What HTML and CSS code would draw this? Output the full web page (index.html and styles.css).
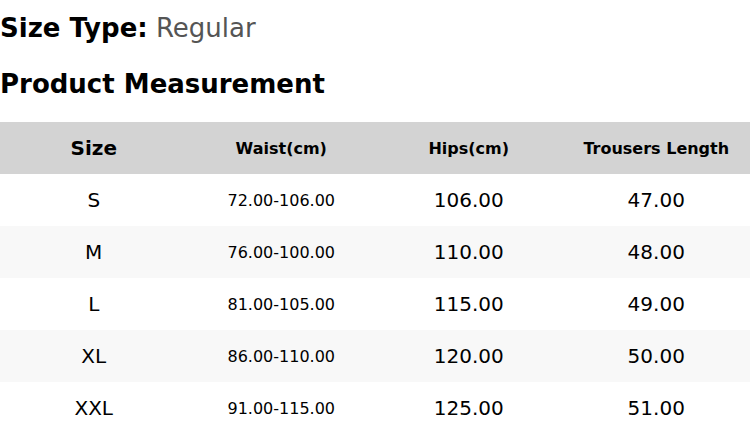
FILE: index.html
```html
<!DOCTYPE html>
<html>
<head>
<meta charset="utf-8">
<link rel="stylesheet" href="styles.css">
</head>
<body>
<div class="page">
  <p class="size-type"><span class="label">Size Type:</span> <span class="value">Regular</span></p>
  <h2 class="title">Product Measurement</h2>
  <table class="chart">
    <thead>
      <tr>
        <th class="col-size">Size</th>
        <th>Waist(cm)</th>
        <th>Hips(cm)</th>
        <th>Trousers Length</th>
      </tr>
    </thead>
    <tbody>
      <tr><td class="big">S</td><td class="small">72.00-106.00</td><td class="big">106.00</td><td class="big">47.00</td></tr>
      <tr><td class="big">M</td><td class="small">76.00-100.00</td><td class="big">110.00</td><td class="big">48.00</td></tr>
      <tr><td class="big">L</td><td class="small">81.00-105.00</td><td class="big">115.00</td><td class="big">49.00</td></tr>
      <tr><td class="big">XL</td><td class="small">86.00-110.00</td><td class="big">120.00</td><td class="big">50.00</td></tr>
      <tr><td class="big">XXL</td><td class="small">91.00-115.00</td><td class="big">125.00</td><td class="big">51.00</td></tr>
    </tbody>
  </table>
</div>
</body>
</html>
```
FILE: styles.css
```css
html, body {
  margin: 0;
  padding: 0;
  background: #ffffff;
}
body {
  font-family: "DejaVu Sans", sans-serif;
  color: #000000;
}
.page {
  padding-top: 13px;
}
.size-type {
  margin: 0;
  font-size: 26px;
  line-height: 30px;
}
.size-type .label {
  font-weight: bold;
}
.size-type .value {
  color: #555555;
}
.title {
  margin: 26px 0 23px;
  font-size: 26px;
  line-height: 30px;
  font-weight: bold;
}
.chart {
  width: 750px;
  border-collapse: collapse;
  table-layout: fixed;
}
.chart th,
.chart td {
  width: 25%;
  height: 52px;
  padding: 0;
  text-align: center;
  vertical-align: middle;
}
.chart thead tr {
  background: #d3d3d3;
}
.chart th {
  font-size: 16px;
  font-weight: bold;
}
.chart th.col-size {
  font-size: 20px;
}
.chart tbody tr:nth-child(even) {
  background: #f8f8f8;
}
.chart td.big {
  font-size: 20px;
}
.chart td.small {
  font-size: 16px;
}
```
